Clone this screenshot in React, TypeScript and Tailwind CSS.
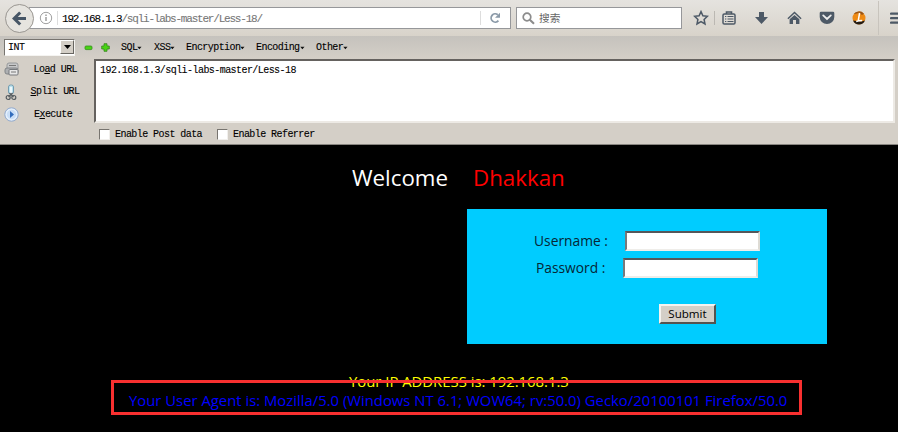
import React from "react";

const mono = "font-['Liberation_Mono','Noto_Sans_CJK_SC',monospace] text-[10px] tracking-[-0.56px] leading-[14px] whitespace-pre text-black [-webkit-text-stroke:0.1px]";
const sans = "font-['Open_Sans','Noto_Sans',sans-serif] whitespace-nowrap";

function MenuItem({ label, width }: { label: string; width: string }) {
  return (
    <div className={`${mono} ${width} flex shrink-0 items-center`}>
      {label}
      <svg width="5" height="4" viewBox="0 0 5 4" className="shrink-0">
        <path d="M0.3 0.8h4.2L2.4 3.2z" fill="#111" />
      </svg>
    </div>
  );
}

function NavBar() {
  return (
    <header className="flex h-9 items-center bg-linear-to-b from-[#e5e3df] to-[#d8d3ca]">
      <div className="relative z-10 ml-[5px] flex h-[29px] w-[29px] shrink-0 items-center justify-center rounded-full border border-[#999691] bg-[#e6e4df]">
        <svg width="15" height="15" viewBox="0 0 15 15">
          <path d="M8.2 1.5L2.2 7.5l6 6M3 7.5h11" fill="none" stroke="#475666" strokeWidth="3.1" />
        </svg>
      </div>
      <div className="-ml-[5px] flex h-[22px] w-[482px] shrink-0 items-center border border-[#96979a] bg-white">
        <svg className="ml-[9px] shrink-0" width="14" height="14" viewBox="0 0 14 14">
          <circle cx="7" cy="7" r="5.7" fill="none" stroke="#a0a0a0" />
          <path d="M7 6v4" stroke="#969696" strokeWidth="1.4" />
          <path d="M7 3.5v1.4" stroke="#969696" strokeWidth="1.4" />
        </svg>
        <div className="ml-[4px] h-[14px] w-px bg-[#ddd]" />
        <div className={`${mono} ml-[4px] flex-1 pt-px text-[11px] tracking-[-1.2px]`}>
          192.168.1.3<span className="text-[#777]">/sqli-labs-master/Less-18/</span>
        </div>
        <div className="h-[14px] w-px bg-[#ddd]" />
        <svg className="mr-[9px] ml-[8px] shrink-0" width="12" height="12" viewBox="0 0 12 12">
          <path d="M9.4 8.6A4.1 4.1 0 1 1 8.8 2.8" fill="none" stroke="#8b9aa8" strokeWidth="1.8" />
          <path d="M11 0.8v5H6z" fill="#8b9aa8" />
        </svg>
      </div>
      <div className="ml-[5px] flex h-[22px] w-[166px] shrink-0 items-center border border-[#96979a] bg-white">
        <svg className="ml-[5px] shrink-0" width="13" height="13" viewBox="0 0 13 13">
          <circle cx="5" cy="5" r="3.8" fill="none" stroke="#8c8c8c" strokeWidth="1.7" />
          <path d="M7.8 7.8l4.2 4" stroke="#8c8c8c" strokeWidth="2.1" />
        </svg>
        <span className="ml-[4px] font-['Noto_Sans_CJK_SC',sans-serif] text-[10.7px] leading-[16px] text-[#666]">搜索</span>
      </div>
      <svg className="ml-[11px] shrink-0" width="16" height="16" viewBox="0 0 16 16">
        <path d="M8 1.6l1.9 4.2 4.5.5-3.3 3.1.9 4.6-4-2.3L4 14l.9-4.6L1.6 6.3l4.5-.5z" fill="none" stroke="#4d5966" strokeWidth="1.5" />
      </svg>
      <div className="ml-[5px] h-[14px] w-px shrink-0 bg-[#bbb8b2]" />
      <svg className="ml-[7px] shrink-0" width="14" height="14" viewBox="0 0 14 14" fill="none" stroke="#4d5966">
        <path d="M4.5 3V1h5v2" strokeWidth="1.6" />
        <rect x="1" y="3" width="12" height="10" rx="1.3" strokeWidth="1.5" />
        <path d="M3 5.5h1.3M5.5 5.5h6M3 8h1.3M5.5 8h6M3 10.5h1.3M5.5 10.5h6" strokeWidth="1.1" />
      </svg>
      <svg className="ml-[19px] shrink-0" width="13" height="14" viewBox="0 0 13 14">
        <path d="M4 1h5v5h4L6.5 13 0 6h4z" fill="#4d5966" />
      </svg>
      <svg className="ml-[19px] shrink-0" width="15" height="14" viewBox="0 0 15 14" fill="#4d5966">
        <path d="M7.5 0.5L14.6 7.2l-1 1L7.5 2.6 1.4 8.2l-1-1z" />
        <path d="M7.5 4L12.4 8.3V13H9V9H6v4H2.6V8.3z" />
      </svg>
      <svg className="ml-[17px] shrink-0" width="16" height="14" viewBox="0 0 16 14">
        <path d="M2 .8h12q1.3 0 1.3 1.3V6A7.3 7 0 0 1 .7 6V2.1Q.7.8 2 .8z" fill="#4d5966" />
        <path d="M4.2 4.4L8 8l3.8-3.6" fill="none" stroke="#eee" strokeWidth="1.8" strokeLinecap="round" />
      </svg>
      <svg className="ml-[17px] shrink-0" width="14" height="14" viewBox="0 0 14 14">
        <circle cx="7" cy="7" r="6.5" fill="#ee8a14" />
        <path d="M1 9.5A6.5 6.5 0 0 0 13 9.5L9 10.5z" fill="#211a13" />
        <path d="M1.5 3.3A6.5 6.5 0 0 1 12 2.8L10 4 7 2z" fill="#9b5617" />
        <path d="M7.6 2L6.2 9.8l4-.4M4.2 10.4l2-.3" fill="none" stroke="#fff" strokeWidth="1.5" />
      </svg>
      <div className="ml-[12px] h-[34px] w-px shrink-0 bg-[#c8c4bd]" />
      <svg className="ml-[11px] shrink-0" width="9" height="13" viewBox="0 0 9 13">
        <path d="M1 1.7h8M1 6.2h8M1 10.7h8" stroke="#4d5966" strokeWidth="2.2" strokeLinecap="round" />
      </svg>
    </header>
  );
}

function HackBar() {
  return (
    <section className="flex h-[109px] flex-col border-b border-[#888580] bg-[linear-gradient(to_bottom,#c5c2bd_0px,#d4cfc7_23px)]">
      <div className="flex h-[22px] shrink-0 items-center">
        <div className="ml-1 flex h-[17px] w-[71px] shrink-0 items-center border border-t-[#77746f] border-l-[#77746f] border-r-[#f5f4f1] border-b-[#f5f4f1] bg-white">
          <span className={`${mono} ml-[3px] flex-1 pt-px`}>INT</span>
          <div className="flex h-[14px] w-[14px] items-center justify-center border border-t-white border-l-white border-r-[#686661] border-b-[#686661] bg-[#d4cfc7]">
            <svg width="7" height="4" viewBox="0 0 7 4"><path d="M0 0h7L3.5 4z" fill="#000" /></svg>
          </div>
        </div>
        <svg className="mt-px ml-[9px] shrink-0" width="9" height="6" viewBox="0 0 9 6">
          <rect x="1" y="1" width="7" height="3.6" rx="1" fill="#48d414" stroke="#398b1f" strokeWidth=".8" />
        </svg>
        <svg className="mt-px ml-[8px] shrink-0" width="9" height="9" viewBox="0 0 9 9">
          <path d="M3 .7h3V3h2.3v3H6v2.3H3V6H.7V3H3z" fill="#48d414" stroke="#39851f" strokeWidth=".8" />
        </svg>
        <div className="ml-[11px] flex pt-[2px]">
          <MenuItem label="SQL" width="w-[33px]" />
          <MenuItem label="XSS" width="w-[32px]" />
          <MenuItem label="Encryption" width="w-[70px]" />
          <MenuItem label="Encoding" width="w-[60px]" />
          <MenuItem label="Other" width="w-[40px]" />
        </div>
      </div>
      <div className="flex flex-1">
        <div className="flex w-[94px] shrink-0 flex-col">
          <div className="flex h-[23px] items-center">
            <svg className="ml-[4px] shrink-0" width="16" height="15" viewBox="0 0 16 15">
              <path d="M3 7V3q0-2 2-2h7q2 0 2 2v4z" fill="#c7c8c9" stroke="#96989a" />
              <rect x="1" y="6" width="13" height="6" rx="2" fill="#aeb0b2" stroke="#818487" />
              <rect x="5" y="7.5" width="9" height="5.5" rx="1" fill="#e7e7e7" stroke="#76797c" />
              <path d="M7 10h5M5 3.5h7" stroke="#777" />
            </svg>
            <span className={`${mono} ml-[13.5px]`}>Lo<u>a</u>d URL</span>
          </div>
          <div className="flex h-[22px] items-center">
            <svg className="ml-[5px] shrink-0" width="12" height="17" viewBox="0 0 12 17">
              <rect x="3.5" y="1" width="5" height="9" rx="2" fill="#bce2ef" stroke="#739caf" />
              <path d="M6 3v7" stroke="#fff" strokeWidth="1.5" />
              <path d="M4.5 9l4 4M7.5 9l-4 4" stroke="#555c60" strokeWidth="1.2" />
              <circle cx="3.2" cy="13.5" r="2" fill="none" stroke="#555c60" strokeWidth="1.2" />
              <circle cx="8.8" cy="13.5" r="2" fill="none" stroke="#555c60" strokeWidth="1.2" />
            </svg>
            <span className={`${mono} ml-[13.5px]`}><u>S</u>plit URL</span>
          </div>
          <div className="flex h-[23px] items-center">
            <svg className="ml-[4px] shrink-0" width="15" height="15" viewBox="0 0 15 15">
              <circle cx="7.5" cy="7.5" r="6.7" fill="#e5f0fc" stroke="#90a8cb" />
              <circle cx="7.5" cy="7.5" r="4.7" fill="#c9def6" />
              <path d="M6 4l4 3.5L6 11z" fill="#326dbd" />
            </svg>
            <span className={`${mono} ml-[15px]`}>E<u>x</u>ecute</span>
          </div>
        </div>
        <div className="flex flex-1 flex-col">
          <div className="mt-[1px] mr-[3px] h-[64px] border-2 border-t-[#65625f] border-l-[#65625f] border-r-[#edeae5] border-b-[#edeae5] bg-white pl-[4px] pt-[3px]">
            <div className={mono}>192.168.1.3/sqli-labs-master/Less-18</div>
          </div>
          <div className="flex flex-1 items-center pt-[1px] pl-[5px]">
            <div className="h-[11px] w-[11px] border border-t-[#77746f] border-l-[#77746f] border-r-[#f1efec] border-b-[#f1efec] bg-white" />
            <span className={`${mono} ml-[5px] w-[102px] pt-[2px]`}>Enable Post data</span>
            <div className="h-[11px] w-[11px] border border-t-[#77746f] border-l-[#77746f] border-r-[#f1efec] border-b-[#f1efec] bg-white" />
            <span className={`${mono} ml-[5px] pt-[2px]`}>Enable Referrer</span>
          </div>
        </div>
      </div>
    </section>
  );
}

function LoginForm() {
  const field = "h-5 w-[135px] shrink-0 border-2 border-t-[#55575a] border-l-[#77797b] border-r-[#dedbd4] border-b-[#efede9] bg-white";
  return (
    <form className="ml-[467px] h-[135px] w-[360px] bg-[#00ccff] pt-[22px]">
      <div className="flex h-5 items-center">
        <label className={`${sans} -mt-px ml-[67px] w-[91px] text-[13.8px] leading-5 text-[#062635]`}>Username :</label>
        <div className={field} />
      </div>
      <div className="mt-[7px] flex h-5 items-center">
        <label className={`${sans} -mt-px ml-[69px] w-[87px] text-[13.8px] leading-5 text-[#062635]`}>Password :</label>
        <div className={field} />
      </div>
      <button type="button" className={`${sans} mt-[26px] ml-[192px] flex h-5 w-[57px] items-center justify-center border-2 border-t-[#f5f3ef] border-l-[#f5f3ef] border-r-[#55534f] border-b-[#55534f] bg-[#d4cfc7] text-[11.6px] leading-4 text-black`}>Submit</button>
    </form>
  );
}

export default function App() {
  return (
    <div className="relative h-[432px] w-[898px] overflow-hidden bg-black">
      <NavBar />
      <HackBar />
      <main>
        <h1 className={`${sans} mt-[16px] mb-[14px] flex h-[34px] items-center text-[22.3px] leading-8`}>
          <span className="ml-[352px] w-[121px] text-white">Welcome</span>
          <span className="text-[#f00]">Dhakkan</span>
        </h1>
        <LoginForm />
        <p className={`${sans} mt-[27px] ml-[349px] text-[14.85px] leading-[20px] text-[#ff0]`}>Your IP ADDRESS is: 192.168.1.3</p>
        <p className={`${sans} ml-[129px] text-[14.85px] leading-[19px] text-[#00f]`}>Your User Agent is: Mozilla/5.0 (Windows NT 6.1; WOW64; rv:50.0) Gecko/20100101 Firefox/50.0</p>
      </main>
      <div className="absolute top-[380px] left-[111px] h-[35px] w-[691px] border-3 border-[#f83030]" />
    </div>
  );
}
